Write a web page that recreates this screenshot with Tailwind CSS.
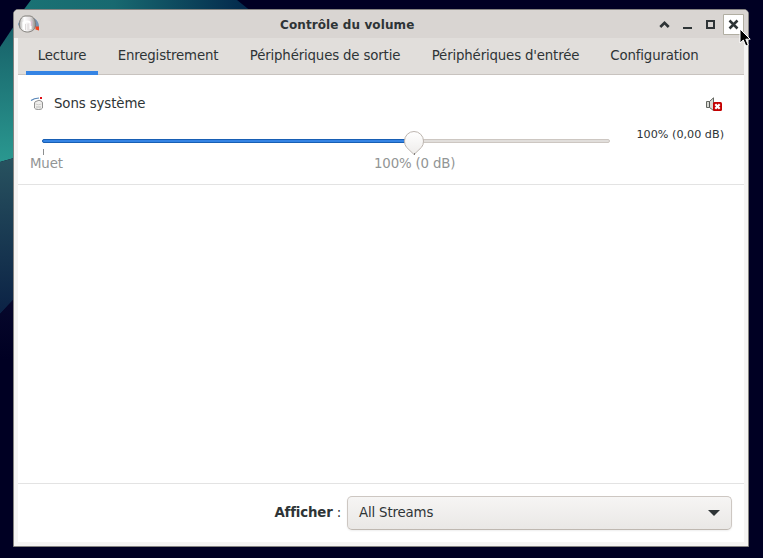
<!DOCTYPE html>
<html lang="fr">
<head>
<meta charset="utf-8">
<title>Contrôle du volume</title>
<script src="https://cdn.jsdelivr.net/npm/@tailwindcss/browser@4"></script>
</head>
<body class="relative h-[558px] w-[763px] overflow-hidden bg-[#000023] font-['DejaVu_Sans',sans-serif] text-[13.333px] leading-4 tracking-[-0.16px] text-[#2e3436]">
<!-- wallpaper -->
<svg class="absolute inset-0" width="763" height="558" viewBox="0 0 763 558">
  <defs>
    <linearGradient id="teal" x1="0" y1="0" x2="0" y2="1"><stop offset="0" stop-color="#176068"/><stop offset="1" stop-color="#2a9890"/></linearGradient>
    <linearGradient id="top" x1="0" y1="0" x2="1" y2="0"><stop offset="0" stop-color="#1a7274"/><stop offset=".4" stop-color="#186970"/><stop offset="1" stop-color="#02264a"/></linearGradient>
    <linearGradient id="low" x1="0" y1="0" x2="0" y2="1"><stop offset="0" stop-color="#28525f"/><stop offset="1" stop-color="#0b2245"/></linearGradient>
    <linearGradient id="dark" x1="0" y1="0" x2="0" y2="1"><stop offset="0" stop-color="#07082c"/><stop offset="1" stop-color="#000023"/></linearGradient>
  </defs>
  <path d="M31 0H237L252 12H22Z" fill="url(#top)"/>
  <path d="M0 47L14 26V158L0 162Z" fill="url(#teal)"/>
  <path d="M0 162L14 158V299L0 314Z" fill="url(#low)"/>
  <path d="M0 314L14 299V360H0Z" fill="url(#dark)"/>
</svg>

<main class="relative ml-[13px] mt-[9px] flex h-[538px] w-[736px] flex-col overflow-hidden rounded-t-[5px] border border-[#858481] bg-[#f5f4f3]">
  <header class="flex h-7 shrink-0 items-center bg-[#d9d5d2] pl-[4px] pr-1">
    <svg class="mt-[-1px] shrink-0" width="22" height="18" viewBox="0 0 22 18">
      <defs><linearGradient id="orb" x1="0" x2="1"><stop offset="0" stop-color="#b5b4b2"/><stop offset=".3" stop-color="#fff"/><stop offset=".65" stop-color="#e6e2e3"/><stop offset="1" stop-color="#918e8b"/></linearGradient></defs>
      <path d="M15 3C19 4 21 8 21 12H16Z" fill="#7893b3"/>
      <path d="M2 5L0 9L2 14Z" fill="#7893b3"/>
      <path d="M1.500 11C1 6 3 1.500 7 1H12C16 1.500 18 6 17.500 11C17 15 13 17 9.500 17C6 17 2 15 1.500 11Z" fill="url(#orb)" stroke="#7f7d78"/>
      <path d="M5.500 14V7.500Q9 5.500 12.500 7.500V14" fill="none" stroke="#fff" stroke-width="2"/>
      <path d="M7.500 9V15M10 9V15" stroke="#dddada"/>
      <path d="M13.500 6V11" stroke="#dcbfd0" stroke-width="1.500"/>
      <path d="M17.500 11.500H21V15.500L17.500 14.500Z" fill="#f0431d"/>
    </svg>
    <h1 class="ml-[240px] w-[136px] whitespace-nowrap pt-px text-left text-[12px] font-bold tracking-[.1px]">Contrôle du volume</h1>
    <div class="ml-auto flex items-center gap-[2px]">
      <svg width="21" height="21" viewBox="0 0 21 21"><path d="M6.300 13L10.500 8.800L14.700 13" fill="none" stroke="#2e3436" stroke-width="2.700"/></svg>
      <svg width="21" height="21" viewBox="0 0 21 21"><path d="M6 13H15V15H6Z" fill="#2e3436"/></svg>
      <svg width="21" height="21" viewBox="0 0 21 21"><path d="M7 7H14V14H7Z" fill="none" stroke="#2e3436" stroke-width="2"/></svg>
      <svg width="21" height="21" viewBox="0 0 21 21"><path d="M.5 .5H20.500V20.500H.5Z" fill="#fff" stroke="#b1aea2"/><path d="M6.500 6.500L14.500 14.500M14.500 6.500L6.500 14.500" stroke="#2e3436" stroke-width="2.500"/></svg>
    </div>
  </header>

  <div class="mx-1 mb-1 flex flex-1 flex-col bg-white">
    <nav class="flex h-[37px] shrink-0 gap-2 whitespace-nowrap border-b border-[#c8c3bf] bg-[#e1dedb] pl-2 text-center leading-[35px]">
      <div class="h-[37px] w-[72px] border-b-4 border-[#3584e4]">Lecture</div>
      <div class="w-[124px]">Enregistrement</div>
      <div class="w-[174px]">Périphériques de sortie</div>
      <div class="w-[171px]">Périphériques d'entrée</div>
      <div class="w-[111px]">Configuration</div>
    </nav>

    <section class="flex h-[110px] shrink-0 flex-col border-b border-[#e3e3e3] pl-3 pr-5">
      <div class="mt-5 flex h-5 items-center">
        <svg class="mt-[-2px]" width="16" height="16" viewBox="0 0 16 16">
          <path d="M1 4.500Q4 2.300 9 2" fill="none" stroke="#5785b8" stroke-width="1.200"/>
          <path d="M10 1H12V3H10Z" fill="#df1018"/>
          <path d="M4.500 7Q4.500 5.500 7 5Q9 3.500 11 5Q12.500 5.500 12.500 7V12Q12 13.500 8.500 13.500Q5 13.500 4.500 12Z" fill="#f0efed" stroke="#777" stroke-width=".8"/>
          <path d="M5.500 8Q8.500 9.500 11.500 8" fill="none" stroke="#c4c4c2" stroke-width=".8"/>
          <path d="M6 10H11V12H6Z" fill="#d6d6d4"/>
        </svg>
        <span class="ml-2 mt-[-3px] tracking-[-.1px]">Sons système</span>
        <svg class="ml-auto mr-[2px]" width="16" height="16" viewBox="0 0 16 16">
          <path d="M.5 4.500H3.500L7.500 .8V13.500L3.500 10.500H.5Z" fill="#d8d9d4" stroke="#656862"/>
          <path d="M3.500 4.500V10.500" stroke="#555753"/>
          <rect x="7" y="5" width="9" height="9" rx="1.500" fill="#c40000"/>
          <path d="M9.300 7.300L13.700 11.700M13.700 7.300L9.300 11.700" stroke="#fff" stroke-width="2.200"/>
        </svg>
      </div>
      <div class="mt-4 flex">
        <div class="w-[592px]">
          <svg class="block" width="592" height="24" viewBox="30 131 592 24">
            <defs><linearGradient id="knob" x1="0" y1="0" x2="0" y2="1"><stop offset="0" stop-color="#fff"/><stop offset="1" stop-color="#eeecea"/></linearGradient></defs>
            <rect x="42.500" y="139.500" width="567" height="3" rx="1.500" fill="#e1dedb" stroke="#cdc7c2"/>
            <rect x="42.500" y="139.500" width="374" height="3" rx="1.500" fill="#3584e4" stroke="#185fb4"/>
            <path d="M43.500 149V155" stroke="#8b8e8f"/>
            <path d="M414 154.500L406.500 147.300Q404.500 145 404.500 141A9.500 9.500 0 0 1 423.500 141Q423.500 145 421.500 147.300Z" fill="url(#knob)" stroke="#bdb6b0"/>
            <path d="M414.500 153V155" stroke="#85817e"/>
          </svg>
          <div class="flex pt-px text-[#929595]"><span class="w-[344px]">Muet</span><span>100% (0 dB)</span></div>
        </div>
        <span class="ml-auto mt-[-4px] whitespace-nowrap text-[11.2px] tracking-normal">100% (0,00 dB)</span>
      </div>
    </section>

    <div class="flex-1"></div>

    <footer class="flex h-[59px] shrink-0 justify-end border-t border-[#e3e3e3] pr-3 pt-3">
      <label class="mr-[6px] leading-[34px]"><b>Afficher</b> :</label>
      <button class="flex h-[34px] w-[385px] items-center justify-between rounded-[5px] border border-[#cdc7c2] border-b-[#bfb8b1] bg-linear-to-b from-[#f6f5f4] to-[#eae8e6] pl-[11px] pr-[11px] text-left tracking-[-0.16px] shadow-[0_1px_2px_rgba(0,0,0,.07)]">
        <span>All Streams</span>
        <svg width="12" height="6" viewBox="0 0 12 6"><path d="M0 0H12L6 6Z" fill="#2e3436"/></svg>
      </button>
    </footer>
  </div>
</main>

<!-- mouse pointer -->
<svg class="absolute left-[739px] top-[28px]" width="13" height="20" viewBox="0 0 13 20">
  <path d="M1 1V15L4.300 12L6.800 18L9.300 17L6.800 11.200H11.200Z" fill="#000" stroke="#fff"/>
</svg>
</body>
</html>
